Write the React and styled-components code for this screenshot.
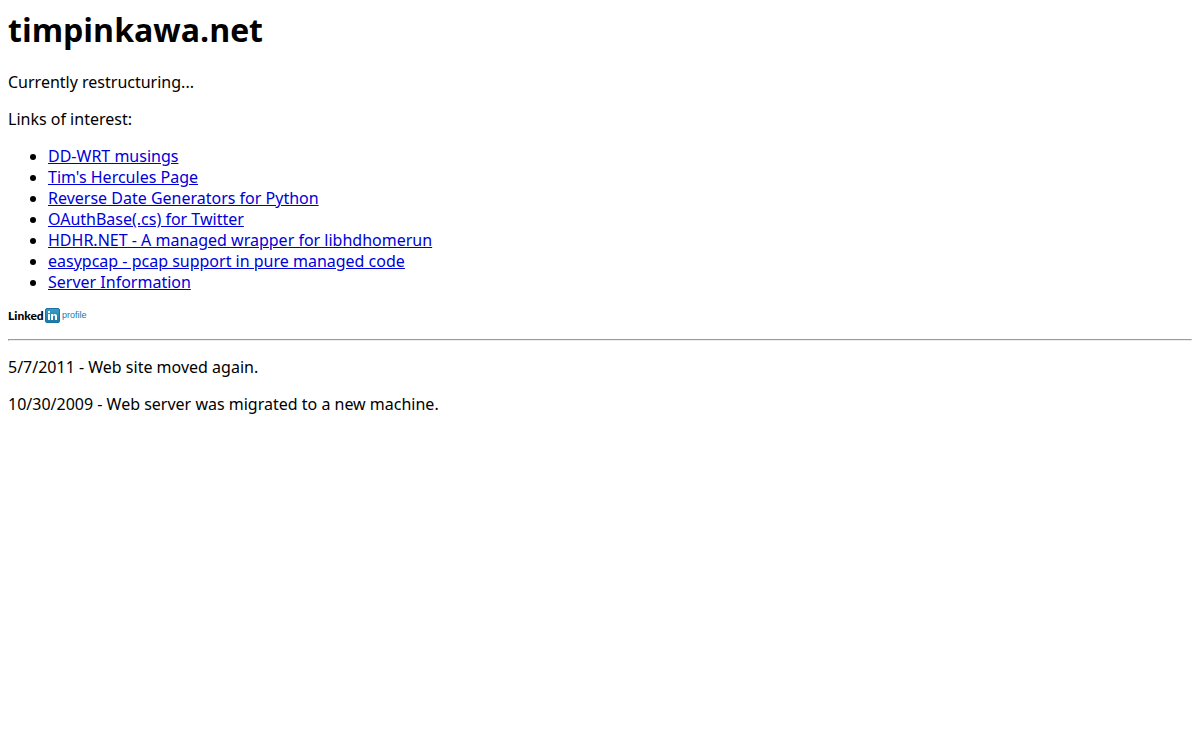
import React from "react";
import styled, { createGlobalStyle } from "styled-components";

const GlobalStyle = createGlobalStyle`
  body {
    margin: 8px;
    background: #fff;
    color: #000;
    font: 16px/21px "Noto Sans", "Open Sans", sans-serif;
  }
`;

const Title = styled.h1`
  margin: 0 0 21px;
  font-family: "Open Sans", sans-serif;
  font-size: 32px;
  line-height: 43px;
  font-weight: 700;
`;

const Text = styled.p`
  margin: 16px 0;
`;

const LinkList = styled.ul`
  margin: 16px 0 15px;
  padding-left: 40px;
`;

const Link = styled.a`
  color: #0000d8;
`;

const ProfileLink = styled.a`
  display: flex;
  align-items: center;
  width: fit-content;
  height: 15px;
  text-decoration: none;
  color: #000;
`;

const Word = styled.span`
  width: 37px;
  font: 900 12px/15px Lato, sans-serif;
`;

const Suffix = styled.span`
  margin-left: 2px;
  color: #1b79a8;
  font: 9px/15px "Liberation Sans", sans-serif;
`;

const Rule = styled.hr`
  margin: 16px 0;
  border: 1px solid;
  border-color: #9a9a9a #eee #eee #9a9a9a;
`;

const links = [
  "DD-WRT musings",
  "Tim's Hercules Page",
  "Reverse Date Generators for Python",
  "OAuthBase(.cs) for Twitter",
  "HDHR.NET - A managed wrapper for libhdhomerun",
  "easypcap - pcap support in pure managed code",
  "Server Information",
];

export default function App() {
  return (
    <main>
      <GlobalStyle />
      <Title>timpinkawa.net</Title>
      <Text>Currently restructuring...</Text>
      <Text>Links of interest:</Text>
      <LinkList>
        {links.map((label) => (
          <li key={label}><Link href="#">{label}</Link></li>
        ))}
      </LinkList>
      <ProfileLink href="#">
        <Word>Linked</Word>
        <svg width="15" height="15" viewBox="0 0 15 15" aria-hidden="true">
          <defs>
            <linearGradient id="badge" x1="0" y1="0" x2="0" y2="1">
              <stop offset="0" stopColor="#3a9cc8" />
              <stop offset="1" stopColor="#1b79a8" />
            </linearGradient>
          </defs>
          <rect x=".5" y=".5" width="14" height="14" rx="1.5" fill="url(#badge)" stroke="#1a72a0" />
          <path d="M3 6h2v6H3zM3 3h2v2H3zM6 6h2v1q1-1 2-1 2 0 2 2v4h-2V8.500q0-1-1-1t-1 1V12H6z" fill="#fff" />
        </svg>
        <Suffix>profile</Suffix>
      </ProfileLink>
      <Rule />
      <Text>5/7/2011 - Web site moved again.</Text>
      <Text>10/30/2009 - Web server was migrated to a new machine.</Text>
    </main>
  );
}
